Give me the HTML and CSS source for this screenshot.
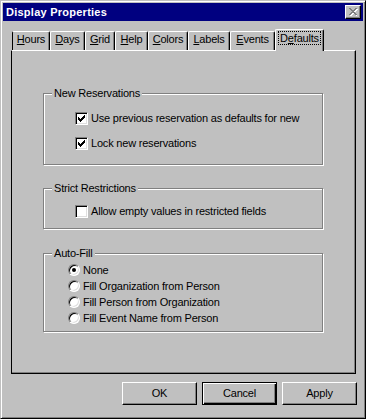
FILE: index.html
```html
<!DOCTYPE html>
<html>
<head>
<meta charset="utf-8">
<link rel="stylesheet" href="styles.css">
</head>
<body>
<div class="window">
  <div class="titlebar">
    <span class="title">Display Properties</span>
    <span class="close">
      <svg width="14" height="12" viewBox="0 0 14 12" shape-rendering="crispEdges">
        <path d="M4 3h2v1h-2zM5 4h2v1h-2zM6 5h2v1h-2zM7 6h2v1h-2zM8 7h2v1h-2zM9 8h2v1h-2zM10 9h1v1h-1z" fill="#fff"/>
        <path d="M10 3h2v1h-2zM9 4h2v1h-2zM8 5h2v1h-2zM5 8h2v1h-2zM6 7h2v1h-2zM4 9h2v1h-2z" fill="#fff"/>
        <path d="M3 2h2v1h-2zM4 3h2v1h-2zM5 4h2v1h-2zM6 5h2v1h-2zM7 6h2v1h-2zM8 7h2v1h-2zM9 8h2v1h-2z" fill="#808080"/>
        <path d="M9 2h2v1h-2zM8 3h2v1h-2zM7 4h2v1h-2zM5 6h2v1h-2zM4 7h2v1h-2zM3 8h2v1h-2z" fill="#808080"/>
      </svg>
    </span>
  </div>

  <div class="tabs">
    <div class="tab tab-first w-hours"><u>H</u>ours</div>
    <div class="tab w-days"><u>D</u>ays</div>
    <div class="tab w-grid"><u>G</u>rid</div>
    <div class="tab w-help"><u>H</u>elp</div>
    <div class="tab w-colors"><u>C</u>olors</div>
    <div class="tab w-labels"><u>L</u>abels</div>
    <div class="tab w-events"><u>E</u>vents</div>
    <div class="tab tab-active w-defaults"><span class="focus">D<u>e</u>faults</span></div>
  </div>

  <div class="panel">
    <div class="group g-new">
      <span class="legend">New Reservations</span>
      <div class="check-row">
        <span class="checkbox"><svg width="7" height="7" viewBox="0 0 7 7" shape-rendering="crispEdges"><path d="M6 0h1v3h-1zM5 1h1v3h-1zM4 2h1v3h-1zM3 3h1v3h-1zM2 4h1v3h-1zM1 3h1v3h-1zM0 2h1v3h-1z" fill="#000"/></svg></span>
        <span class="label">Use previous reservation as defaults for new</span>
      </div>
      <div class="check-row">
        <span class="checkbox"><svg width="7" height="7" viewBox="0 0 7 7" shape-rendering="crispEdges"><path d="M6 0h1v3h-1zM5 1h1v3h-1zM4 2h1v3h-1zM3 3h1v3h-1zM2 4h1v3h-1zM1 3h1v3h-1zM0 2h1v3h-1z" fill="#000"/></svg></span>
        <span class="label">Lock new reservations</span>
      </div>
    </div>

    <div class="group g-strict">
      <span class="legend">Strict Restrictions</span>
      <div class="check-row">
        <span class="checkbox"></span>
        <span class="label">Allow empty values in restricted fields</span>
      </div>
    </div>

    <div class="group g-auto">
      <span class="legend">Auto-Fill</span>
      <div class="radio-row"><span class="radio on"></span><span class="label">None</span></div>
      <div class="radio-row"><span class="radio"></span><span class="label">Fill Organization from Person</span></div>
      <div class="radio-row"><span class="radio"></span><span class="label">Fill Person from Organization</span></div>
      <div class="radio-row"><span class="radio"></span><span class="label">Fill Event Name from Person</span></div>
    </div>
  </div>

  <div class="buttons">
    <div class="btn">OK</div>
    <div class="btn btn-default">Cancel</div>
    <div class="btn">Apply</div>
  </div>
</div>
</body>
</html>
```

FILE: styles.css
```css
html, body {
  margin: 0;
  padding: 0;
  background: #c0c0c0;
}

body {
  font-family: "Liberation Sans", Arial, sans-serif;
  font-size: 11px;
  letter-spacing: -0.2px;
  color: #000;
}

.window {
  box-sizing: border-box;
  width: 366px;
  height: 419px;
  border: 1px solid;
  border-color: #c0c0c0 #000 #000 #c0c0c0;
  box-shadow: inset 1px 1px #fff, inset -1px -1px #808080;
  padding: 2px;
  background: #c0c0c0;
}

.titlebar {
  height: 18px;
  background: #000080;
  color: #fff;
  display: flex;
  align-items: center;
  justify-content: space-between;
  padding: 0 2px 0 3px;
}

.title {
  font-weight: bold;
  font-size: 11px;
  line-height: 13px;
  letter-spacing: 0.25px;
}

.close {
  box-sizing: border-box;
  width: 16px;
  height: 14px;
  background: #c0c0c0;
  border: 1px solid;
  border-color: #fff #000 #000 #fff;
  box-shadow: inset -1px -1px #808080;
  display: flex;
  align-items: flex-start;
  justify-content: flex-start;
}

.close svg {
  display: block;
}

.tabs {
  display: flex;
  align-items: flex-end;
  margin: 8px 0 0 9px;
  height: 21px;
}

.tab {
  box-sizing: border-box;
  height: 19px;
  border-top: 1px solid #fff;
  border-left: 1px solid #fff;
  border-right: 1px solid #000;
  border-radius: 2px 2px 0 0;
  box-shadow: inset -1px 0 #808080;
  padding-top: 1px;
  line-height: 13px;
  text-align: center;
  white-space: nowrap;
  background: #c0c0c0;
}

.tab-first {
  border-left-color: #000;
}

.tab u {
  text-decoration-thickness: 1px;
  text-underline-offset: 1px;
}

.w-hours { width: 38px; }
.w-days { width: 35px; }
.w-grid { width: 30px; }
.w-help { width: 33px; }
.w-colors { width: 40px; }
.w-labels { width: 42px; }
.w-events { width: 45px; }
.w-defaults { width: 49px; }

.tab-active {
  height: 22px;
  margin-bottom: -1px;
  padding-top: 2px;
  position: relative;
  z-index: 1;
}

.focus {
  outline: 1px dotted #000;
  outline-offset: 0;
  padding: 0 1px;
}

.panel {
  box-sizing: border-box;
  width: 345px;
  height: 324px;
  margin-left: 8px;
  border: 1px solid;
  border-color: #fff #000 #000 #000;
  box-shadow: inset -1px -1px #808080;
  padding: 42px 0 0 31px;
}

.group {
  box-sizing: border-box;
  width: 280px;
  border: 1px solid #808080;
  box-shadow: inset 1px 1px #fff, 1px 1px #fff;
  position: relative;
}

.legend {
  position: absolute;
  left: 8px;
  top: -7px;
  padding: 0 2px;
  line-height: 13px;
  background: #c0c0c0;
}

.g-new {
  height: 72px;
  padding: 18px 0 0 31px;
  display: flex;
  flex-direction: column;
  gap: 12px;
}

.g-strict {
  height: 41px;
  margin-top: 23px;
  padding: 16px 0 0 31px;
}

.g-auto {
  height: 79px;
  margin-top: 24px;
  padding: 8px 0 0 24px;
}

.check-row {
  display: flex;
  align-items: center;
  height: 13px;
}

.checkbox {
  box-sizing: border-box;
  width: 13px;
  height: 13px;
  background: #fff;
  border: 1px solid;
  border-color: #808080 #fff #fff #808080;
  box-shadow: inset 1px 1px #000, inset -1px -1px #dfdfdf;
  display: flex;
  align-items: center;
  justify-content: center;
  flex: none;
}

.checkbox svg {
  display: block;
}

.check-row .label {
  margin-left: 3px;
  line-height: 13px;
  white-space: nowrap;
}

.radio-row {
  display: flex;
  align-items: center;
  height: 16px;
}

.radio {
  box-sizing: border-box;
  width: 12px;
  height: 12px;
  border-radius: 50%;
  background: #fff;
  border: 1px solid;
  border-color: #808080 #fff #fff #808080;
  box-shadow: inset 1px 1px #000, inset -1px -1px #dfdfdf;
  display: flex;
  align-items: center;
  justify-content: center;
  flex: none;
}

.radio.on::after {
  content: "";
  width: 4px;
  height: 4px;
  border-radius: 50%;
  background: #000;
}

.radio-row .label {
  margin-left: 3px;
  line-height: 13px;
  white-space: nowrap;
}

.buttons {
  display: flex;
  justify-content: flex-end;
  gap: 5px;
  margin: 8px 6px 0 0;
}

.btn {
  box-sizing: border-box;
  width: 75px;
  height: 23px;
  border: 1px solid;
  border-color: #fff #000 #000 #fff;
  box-shadow: inset -1px -1px #808080;
  display: flex;
  align-items: center;
  justify-content: center;
  line-height: 13px;
}

.btn-default {
  border: 1px solid #000;
  box-shadow: inset 1px 1px #fff, inset -1px -1px #000, inset -2px -2px #808080;
}
```
